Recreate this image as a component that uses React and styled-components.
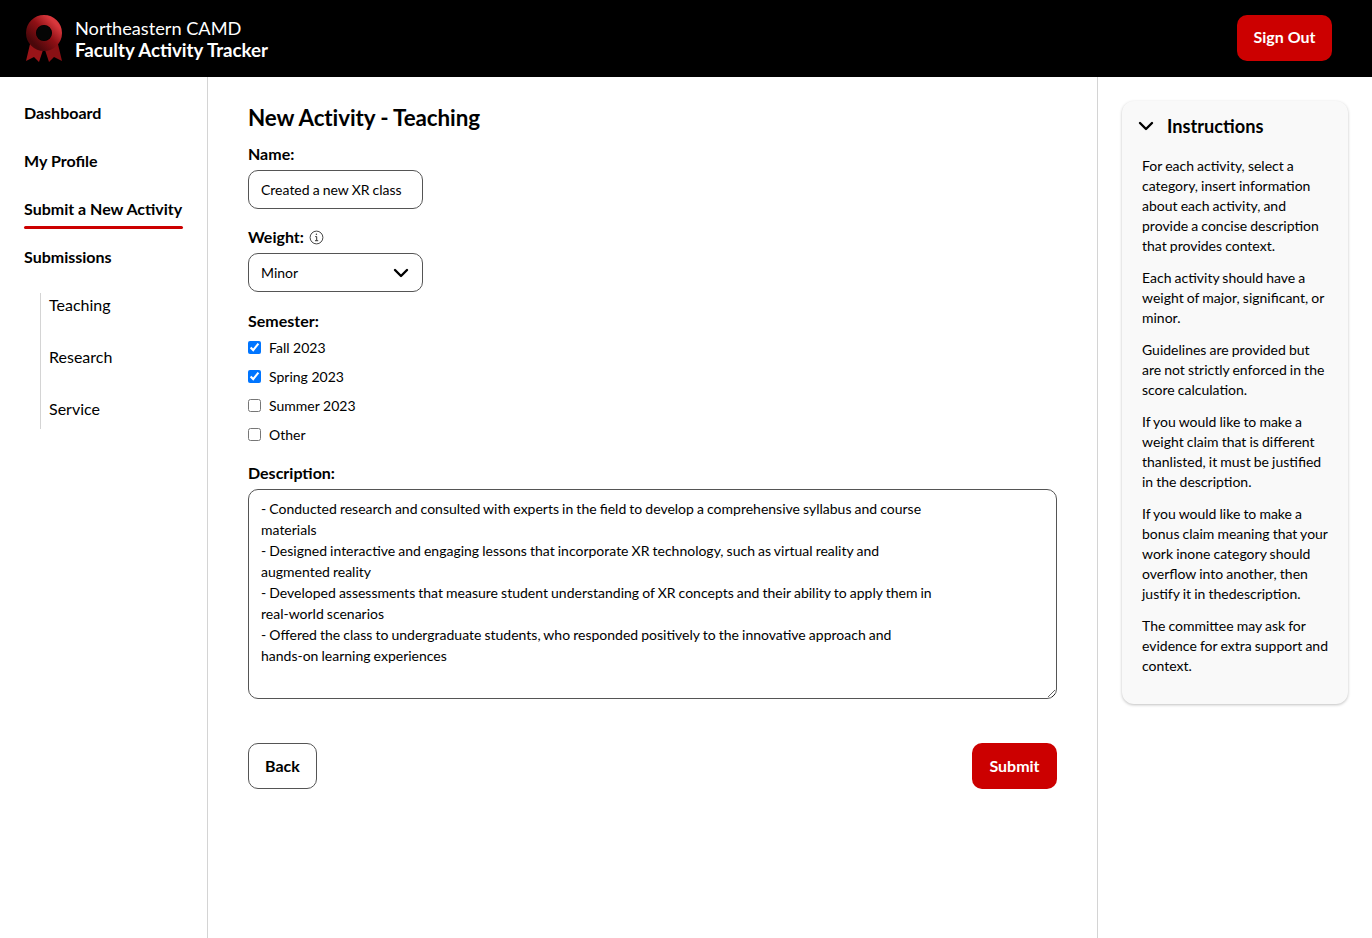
import React from 'react';
import styled, { createGlobalStyle } from 'styled-components';

const Global = createGlobalStyle`
  html, body { margin: 0; padding: 0; background: #fff; }
  body { font-family: Lato, "Liberation Sans", sans-serif; color: #000; }
  * { box-sizing: border-box; }
`;

const Page = styled.div`
  width: 100%;
  height: 938px;
  display: flex;
  flex-direction: column;
  overflow: hidden;
`;

const Header = styled.header`
  height: 77px;
  flex: none;
  background: #000;
  display: flex;
  align-items: center;
  justify-content: space-between;
  padding: 0 40px 2px 24px;
`;

const Brand = styled.div`
  display: flex;
  align-items: center;
  gap: 11px;
  color: #fff;
  margin-top: 2px;
`;

const BrandText = styled.div`
  display: flex;
  flex-direction: column;
  line-height: 22px;
  margin-top: 1px;
  span { font-size: 18.2px; font-weight: 400; }
  strong { font-size: 18.7px; font-weight: 700; }
`;

const RedButton = styled.button`
  background: #cc0000;
  color: #fff;
  border: none;
  border-radius: 10px;
  font: 700 16px Lato, sans-serif;
  height: ${(props) => props.$h}px;
  width: ${(props) => props.$w}px;
  padding: 0 0 2px;
`;

const Body = styled.div`
  flex: 1;
  display: flex;
  min-height: 0;
`;

const Sidebar = styled.nav`
  width: 208px;
  flex: none;
  border-right: 1px solid #d4d4d4;
  padding: 24px 0 0 24px;
  display: flex;
  flex-direction: column;
  align-items: flex-start;
`;

const NavItem = styled.a`
  font-size: 16px;
  font-weight: 700;
  height: 48px;
  flex: none;
  line-height: 24px;
  position: relative;
  ${(props) => props.$active && `
    &::after {
      content: '';
      position: absolute;
      left: 0;
      right: -1px;
      top: 29px;
      height: 3px;
      border-radius: 2px;
      background: #cc0000;
    }
  `}
`;

const SubNav = styled.div`
  margin-left: 16px;
  border-left: 1px solid #d4d4d4;
  padding-left: 8px;
  height: 136px;
  display: flex;
  flex-direction: column;
`;

const SubItem = styled.a`
  font-size: 16px;
  height: 52px;
  flex: none;
  line-height: 24px;
`;

const Main = styled.main`
  width: 890px;
  flex: none;
  border-right: 1px solid #d4d4d4;
  padding: 24px 40px 0;
`;

const Title = styled.h1`
  margin: 0 0 7px;
  font-size: 22.4px;
  line-height: 34px;
  font-weight: 700;
  letter-spacing: -0.1px;
`;

const Label = styled.div`
  font-size: 16px;
  font-weight: 700;
  line-height: 24px;
  display: flex;
  align-items: center;
  gap: 5px;
`;

const Field = styled.div`
  display: flex;
  flex-direction: column;
  gap: ${(props) => props.$gap ?? 4}px;
  margin-bottom: ${(props) => props.$mb}px;
`;

const TextInput = styled.input`
  width: 175px;
  height: 39px;
  border: 1px solid #555;
  border-radius: 10px;
  padding: 0 12px;
  font: 14px Lato, sans-serif;
  word-spacing: -0.5px;
  color: #000;
  background: #fff;
  outline: none;
`;

const SelectBox = styled.div`
  width: 175px;
  height: 39px;
  border: 1px solid #555;
  border-radius: 10px;
  padding: 0 13px 0 12px;
  font-size: 14px;
  display: flex;
  align-items: center;
  justify-content: space-between;
`;

const CheckList = styled.div`
  display: flex;
  flex-direction: column;
`;

const CheckRow = styled.label`
  height: 29px;
  display: flex;
  align-items: center;
  gap: 8px;
  font-size: 14px;
  input {
    width: 13px;
    height: 13px;
    margin: 0;
    accent-color: #0075ff;
  }
`;

const TextArea = styled.textarea`
  width: 809px;
  height: 210px;
  display: block;
  border: 1px solid #555;
  border-radius: 10px;
  padding: 8px 12px;
  font: 14px/21px Lato, sans-serif;
  word-spacing: -0.5px;
  color: #000;
  background: #fff;
  outline: none;
  white-space: pre;
  overflow: hidden;
`;

const Actions = styled.div`
  width: 809px;
  margin-top: 44px;
  display: flex;
  justify-content: space-between;
`;

const BackButton = styled.button`
  width: 69px;
  height: 46px;
  background: #fff;
  color: #000;
  border: 1px solid #555;
  border-radius: 10px;
  font: 700 16px Lato, sans-serif;
  padding: 0 0 2px;
`;

const Aside = styled.aside`
  flex: 1;
  padding: 24px 24px 0;
`;

const Card = styled.section`
  width: 226px;
  height: 603px;
  background: #f9f9f9;
  border-radius: 12px;
  box-shadow: 0 1px 3px rgba(0, 0, 0, 0.25);
  padding: 13px 8px 0 20px;
`;

const CardHead = styled.div`
  display: flex;
  align-items: center;
  gap: 13px;
  height: 24px;
  font-size: 18.2px;
  font-weight: 700;
  margin-left: -4px;
  margin-bottom: 18px;
  line-height: 22px;
`;

const Para = styled.p`
  margin: 0 0 12px;
  font-size: 14px;
  line-height: 20px;
  word-spacing: -0.5px;
  white-space: pre-line;
`;

const Chevron = ({ size }) => (
  <svg width={size} height={size} viewBox="0 0 16 16" fill="none">
    <path d="M2 5l6 6 6-6" stroke="#000" strokeWidth="2.4" strokeLinecap="round" strokeLinejoin="round" />
  </svg>
);

const InfoIcon = () => (
  <svg width="15" height="15" viewBox="0 0 15 15" fill="none" stroke="#333">
    <circle cx="7.5" cy="7.5" r="6.4" strokeWidth="0.9" />
    <path d="M6.2 6.6h1.5v4M6 10.7h3.2" strokeWidth="1" />
    <circle cx="7.4" cy="4.3" r="0.7" fill="#333" stroke="none" />
  </svg>
);

const Logo = () => (
  <svg width="40" height="48" viewBox="0 0 40 48">
    <defs>
      <linearGradient id="ring" x1="0.1" y1="0.9" x2="0.9" y2="0.1">
        <stop offset="0" stopColor="#4a070a" />
        <stop offset="0.55" stopColor="#8f1015" />
        <stop offset="1" stopColor="#d8373c" />
      </linearGradient>
    </defs>
    <path d="M7 25L2 46l8-4 5 5 6-18z" fill="#9a1418" />
    <path d="M33 25l5 21-8-4-5 5-6-18z" fill="#8a1014" />
    <circle cx="20" cy="18" r="13" fill="none" stroke="url(#ring)" strokeWidth="10" />
    <circle cx="20" cy="18" r="7.6" fill="#050505" />
  </svg>
);

const description = `- Conducted research and consulted with experts in the field to develop a comprehensive syllabus and course
materials
- Designed interactive and engaging lessons that incorporate XR technology, such as virtual reality and
augmented reality
- Developed assessments that measure student understanding of XR concepts and their ability to apply them in
real-world scenarios
- Offered the class to undergraduate students, who responded positively to the innovative approach and
hands-on learning experiences`;

const instructions = [
  'For each activity, select a\ncategory, insert information\nabout each activity, and\nprovide a concise description\nthat provides context.',
  'Each activity should have a\nweight of major, significant, or\nminor.',
  'Guidelines are provided but\nare not strictly enforced in the\nscore calculation.',
  'If you would like to make a\nweight claim that is different\nthanlisted, it must be justified\nin the description.',
  'If you would like to make a\nbonus claim meaning that your\nwork inone category should\noverflow into another, then\njustify it in thedescription.',
  'The committee may ask for\nevidence for extra support and\ncontext.',
];

const semesters = [
  { name: 'Fall 2023', on: true },
  { name: 'Spring 2023', on: true },
  { name: 'Summer 2023', on: false },
  { name: 'Other', on: false },
];

export default function App() {
  return (
    <Page>
      <Global />
      <Header>
        <Brand>
          <Logo />
          <BrandText>
            <span>Northeastern CAMD</span>
            <strong>Faculty Activity Tracker</strong>
          </BrandText>
        </Brand>
        <RedButton $w={95} $h={46}>Sign Out</RedButton>
      </Header>
      <Body>
        <Sidebar>
          <NavItem>Dashboard</NavItem>
          <NavItem>My Profile</NavItem>
          <NavItem $active>Submit a New Activity</NavItem>
          <NavItem>Submissions</NavItem>
          <SubNav>
            <SubItem>Teaching</SubItem>
            <SubItem>Research</SubItem>
            <SubItem>Service</SubItem>
          </SubNav>
        </Sidebar>
        <Main>
          <Title>New Activity - Teaching</Title>
          <Field $mb={16}>
            <Label>Name:</Label>
            <TextInput defaultValue="Created a new XR class" />
          </Field>
          <Field $mb={17}>
            <Label>Weight: <InfoIcon /></Label>
            <SelectBox>Minor <Chevron size={16} /></SelectBox>
          </Field>
          <Field $mb={12} $gap={0}>
            <Label>Semester:</Label>
            <CheckList>
              {semesters.map((s) => (
                <CheckRow key={s.name}>
                  <input type="checkbox" defaultChecked={s.on} />
                  {s.name}
                </CheckRow>
              ))}
            </CheckList>
          </Field>
          <Field $mb={0}>
            <Label>Description:</Label>
            <TextArea defaultValue={description} />
          </Field>
          <Actions>
            <BackButton>Back</BackButton>
            <RedButton $w={85} $h={46}>Submit</RedButton>
          </Actions>
        </Main>
        <Aside>
          <Card>
            <CardHead><Chevron size={16} /> Instructions</CardHead>
            {instructions.map((text, i) => <Para key={i}>{text}</Para>)}
          </Card>
        </Aside>
      </Body>
    </Page>
  );
}
